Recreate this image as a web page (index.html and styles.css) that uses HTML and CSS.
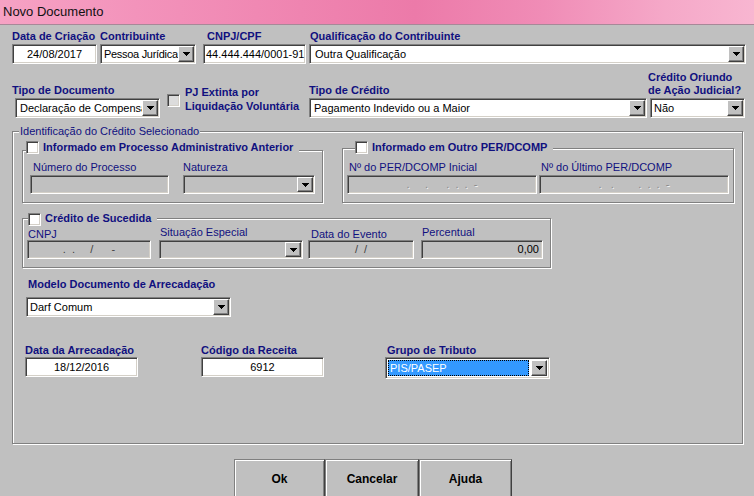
FILE: index.html
```html
<!DOCTYPE html>
<html lang="pt-BR">
<head>
<meta charset="utf-8">
<title>Novo Documento</title>
<link rel="stylesheet" href="styles.css">
</head>
<body>
<div class="titlebar">Novo Documento</div>
<main class="dialog">
  <div class="row row-top">
    <div class="field w-data">
      <span class="lbl">Data de Criação</span>
      <div class="input center">24/08/2017</div>
    </div>
    <div class="field w-contrib">
      <span class="lbl">Contribuinte</span>
      <div class="select"><span class="val tight">Pessoa Jurídica</span><span class="dd"><svg width="7" height="4" viewBox="0 0 7 4"><path d="M0 0H7V1H6V2H5V3H4V4H3V3H2V2H1V1H0Z"/></svg></span></div>
    </div>
    <div class="field w-cnpj">
      <span class="lbl">CNPJ/CPF</span>
      <div class="input">44.444.444/0001-91</div>
    </div>
    <div class="field w-qual">
      <span class="lbl">Qualificação do Contribuinte</span>
      <div class="select"><span class="val">Outra Qualificação</span><span class="dd"><svg width="7" height="4" viewBox="0 0 7 4"><path d="M0 0H7V1H6V2H5V3H4V4H3V3H2V2H1V1H0Z"/></svg></span></div>
    </div>
  </div>

  <div class="row row-second">
    <div class="field w-tipodoc">
      <span class="lbl">Tipo de Documento</span>
      <div class="select"><span class="val">Declaração de Compensação</span><span class="dd"><svg width="7" height="4" viewBox="0 0 7 4"><path d="M0 0H7V1H6V2H5V3H4V4H3V3H2V2H1V1H0Z"/></svg></span></div>
    </div>
    <div class="pj">
      <span class="check gray"></span>
      <span class="pj-text">PJ Extinta por<br>Liquidação Voluntária</span>
    </div>
    <div class="field w-tipocred">
      <span class="lbl">Tipo de Crédito</span>
      <div class="select"><span class="val">Pagamento Indevido ou a Maior</span><span class="dd"><svg width="7" height="4" viewBox="0 0 7 4"><path d="M0 0H7V1H6V2H5V3H4V4H3V3H2V2H1V1H0Z"/></svg></span></div>
    </div>
    <div class="field w-oriundo">
      <span class="lbl">Crédito Oriundo<br>de Ação Judicial?</span>
      <div class="select"><span class="val">Não</span><span class="dd"><svg width="7" height="4" viewBox="0 0 7 4"><path d="M0 0H7V1H6V2H5V3H4V4H3V3H2V2H1V1H0Z"/></svg></span></div>
    </div>
  </div>

  <section class="group outer">
    <div class="gtitle outer-title">Identificação do Crédito Selecionado</div>

    <div class="subgroups">
      <div class="group g-proc">
        <div class="gtitle chk-title"><span class="check"></span><b>Informado em Processo Administrativo Anterior</b></div>
        <div class="fields">
          <div class="field w-nproc">
            <span class="sl">Número do Processo</span>
            <div class="input sm disabled"></div>
          </div>
          <div class="field w-natur">
            <span class="sl">Natureza</span>
            <div class="select sm disabled"><span class="val"></span><span class="dd"><svg width="7" height="4" viewBox="0 0 7 4"><path d="M0 0H7V1H6V2H5V3H4V4H3V3H2V2H1V1H0Z"/></svg></span></div>
          </div>
        </div>
      </div>

      <div class="group g-per">
        <div class="gtitle chk-title"><span class="check"></span><b>Informado em Outro PER/DCOMP</b></div>
        <div class="fields">
          <div class="field w-per">
            <span class="sl">Nº do PER/DCOMP Inicial</span>
            <div class="input sm disabled center mask light">.     .      .  .  .  -</div>
          </div>
          <div class="field w-per2">
            <span class="sl">Nº do Último PER/DCOMP</span>
            <div class="input sm disabled center mask light">.   .        .  .  .  -</div>
          </div>
        </div>
      </div>
    </div>

    <div class="group g-suc">
      <div class="gtitle chk-title"><span class="check"></span><b>Crédito de Sucedida</b></div>
      <div class="fields">
        <div class="field w-scnpj">
          <span class="sl low">CNPJ</span>
          <div class="input sm disabled center mask">.  .     /      -</div>
        </div>
        <div class="field w-sit">
          <span class="sl">Situação Especial</span>
          <div class="select sm disabled"><span class="val"></span><span class="dd"><svg width="7" height="4" viewBox="0 0 7 4"><path d="M0 0H7V1H6V2H5V3H4V4H3V3H2V2H1V1H0Z"/></svg></span></div>
        </div>
        <div class="field w-evento">
          <span class="sl low">Data do Evento</span>
          <div class="input sm disabled center mask">/  /</div>
        </div>
        <div class="field w-perc">
          <span class="sl">Percentual</span>
          <div class="input sm disabled right">0,00</div>
        </div>
      </div>
    </div>

    <div class="field modelo">
      <span class="lbl">Modelo Documento de Arrecadação</span>
      <div class="select"><span class="val">Darf Comum</span><span class="dd"><svg width="7" height="4" viewBox="0 0 7 4"><path d="M0 0H7V1H6V2H5V3H4V4H3V3H2V2H1V1H0Z"/></svg></span></div>
    </div>

    <div class="row row-arrec">
      <div class="field w-darr">
        <span class="lbl">Data da Arrecadação</span>
        <div class="input center">18/12/2016</div>
      </div>
      <div class="field w-cod">
        <span class="lbl">Código da Receita</span>
        <div class="input center">6912</div>
      </div>
      <div class="field w-grupo">
        <span class="lbl">Grupo de Tributo</span>
        <div class="select tall focused"><span class="val">PIS/PASEP</span><span class="dd"><svg width="7" height="4" viewBox="0 0 7 4"><path d="M0 0H7V1H6V2H5V3H4V4H3V3H2V2H1V1H0Z"/></svg></span></div>
      </div>
    </div>
  </section>

  <div class="buttons">
    <button class="btn b-ok" type="button">Ok</button>
    <button class="btn b-cancel" type="button">Cancelar</button>
    <button class="btn b-help" type="button">Ajuda</button>
  </div>
</main>
</body>
</html>
```

FILE: styles.css
```css
* { box-sizing: border-box; }
html, body { margin: 0; padding: 0; }
body {
  width: 754px;
  height: 496px;
  overflow: hidden;
  background: #c0c0c0;
  font-family: "Liberation Sans", Arial, sans-serif;
  font-size: 11px;
  color: #000;
}

.titlebar {
  height: 25px;
  padding-left: 3px;
  line-height: 23px;
  font-size: 13px;
  color: #111;
  background: linear-gradient(90deg, #f6a2c4 0%, #f393bb 18%, #ef84b0 40%, #ec7aa9 55%, #f08cb6 72%, #f5a8c8 88%, #f8b6d1 100%);
  border-bottom: 1px solid #a88898;
}

.dialog { display: flex; flex-direction: column; }

.row { display: flex; }
.field { display: flex; flex-direction: column; flex: none; }

.lbl {
  font-weight: bold;
  color: #10107f;
  line-height: 13px;
  white-space: nowrap;
  margin-bottom: 1px;
}
.sl {
  color: #10107f;
  line-height: 13px;
  white-space: nowrap;
  margin-bottom: 1px;
}

/* sunken controls */
.input, .select {
  height: 20px;
  background: #fff;
  border: 1px solid;
  border-color: #808080 #fff #fff #808080;
  box-shadow: inset 1px 1px 0 #404040, inset -1px -1px 0 #d4d0c8;
  white-space: pre;
  overflow: hidden;
}
.input { padding: 0 2px; line-height: 18px; }
.input.sm, .select.sm { height: 19px; line-height: 17px; }
.input.center { text-align: center; }
.input.right { text-align: right; padding-right: 3px; }
.input.disabled, .select.disabled { background: #c0c0c0; }
.mask { color: #404040; }
.mask.light { color: #8a8a8a; text-shadow: 1px 1px 0 #f4f4f4; }

.select { display: flex; }
.select .val {
  flex: 1;
  min-width: 0;
  padding-left: 3px;
  line-height: 18px;
  overflow: hidden;
  white-space: nowrap;
}
.select .val.tight { letter-spacing: -0.3px; }
.select.sm .val { line-height: 17px; }
.dd {
  flex: none;
  width: 16px;
  margin: 1px 1px 1px 0;
  display: flex;
  align-items: center;
  justify-content: center;
  background: #c0c0c0;
  border: 1px solid;
  border-color: #fff #404040 #404040 #fff;
  box-shadow: inset -1px -1px 0 #808080;
}
.dd svg { display: block; fill: #000; shape-rendering: crispEdges; }

.select.tall { height: 22px; padding: 1px; }
.select.focused .val {
  background: #3399ff;
  color: #fff;
  outline: 1px dotted #000;
  outline-offset: -1px;
  margin: 1px 2px 1px 1px;
  line-height: 16px;
  padding-left: 2px;
}

/* row 1 */
.row-top { margin-top: 5px; padding-left: 12px; }
.w-data { width: 85px; }
.w-contrib { width: 96px; margin-left: 3px; }
.w-cnpj { width: 103px; margin-left: 7px; }
.w-cnpj .lbl { padding-left: 4px; }
.w-qual { width: 437px; margin-left: 3px; }
.w-qual .lbl { padding-left: 1px; }
.w-qual .select .val { padding-left: 5px; }

/* row 2 */
.row-second { margin-top: 7px; padding-left: 12px; align-items: flex-end; }
.w-tipodoc { width: 148px; }
.w-tipodoc .select { margin-left: 3px; }
.w-tipodoc .select .val { padding-left: 4px; }
.pj {
  flex: none;
  width: 142px;
  margin-left: 7px;
  margin-bottom: 5px;
  display: flex;
  align-items: flex-end;
}
.pj .check { margin-bottom: 6px; }
.pj-text {
  margin-left: 5px;
  font-weight: bold;
  color: #10107f;
  line-height: 14px;
  white-space: nowrap;
}
.w-tipocred { width: 338px; }
.w-tipocred .select .val { padding-left: 4px; }
.w-oriundo { width: 97px; margin-left: 1px; }
.w-oriundo .select { margin-left: 2px; }

.check {
  flex: none;
  display: block;
  width: 13px;
  height: 13px;
  background: #fff;
  border: 1px solid;
  border-color: #808080 #fff #fff #808080;
  box-shadow: inset 1px 1px 0 #404040, inset -1px -1px 0 #d4d0c8;
}
.check.gray { background: #dcdcdc; }

/* groups */
.group {
  flex: none;
  border: 1px solid #808080;
  box-shadow: inset 1px 1px 0 #fff, 1px 1px 0 #fff;
}
.gtitle {
  width: max-content;
  background: #c0c0c0;
  color: #10107f;
}
.outer {
  margin: 13px 0 0 12px;
  width: 731px;
  height: 313px;
  padding-left: 9px;
  display: flex;
  flex-direction: column;
  align-items: flex-start;
}
.outer-title {
  margin: -7px 0 0 -3px;
  padding: 0 1px;
  line-height: 13px;
}
.chk-title {
  display: flex;
  align-items: flex-start;
  height: 15px;
  line-height: 15px;
  padding-right: 6px;
}
.chk-title .check { margin-top: 1px; margin-right: 4px; }
.chk-title b { font-weight: bold; white-space: nowrap; }

.fields { display: flex; }

.subgroups { display: flex; align-items: flex-start; margin-top: 12px; }

.g-proc { width: 301px; padding: 0 7px 8px 7px; }
.g-proc .chk-title { margin: -11px 0 0 -4px; }
.g-proc .fields { margin-top: 6px; }
.w-nproc { width: 139px; }
.w-nproc .sl { padding-left: 3px; }
.w-natur { width: 132px; margin-left: 14px; }

.g-per { width: 392px; margin-left: 19px; margin-top: -2px; padding: 0 4px 8px 4px; }
.g-per .chk-title { margin: -9px 0 0 8px; }
.g-per .fields { margin-top: 6px; }
.w-per, .w-per2 { width: 190px; }
.w-per2 { margin-left: 2px; }
.w-per .sl, .w-per2 .sl { padding-left: 2px; }

.g-suc { width: 529px; margin-top: 15px; padding: 0 7px 8px 4px; }
.g-suc .chk-title { margin: -8px 0 0 1px; }
.g-suc .chk-title .check { margin-top: 2px; }
.w-scnpj { width: 124px; }
.w-scnpj .sl { padding-left: 1px; }
.w-sit { width: 144px; margin-left: 8px; }
.w-sit .sl { padding-left: 1px; }
.w-evento { width: 106px; margin-left: 5px; }
.w-evento .sl { padding-left: 3px; }
.w-perc { width: 122px; margin-left: 7px; }
.w-perc .sl { padding-left: 1px; }
.sl.low { padding-top: 3px; line-height: 10px; }

.modelo { margin-top: 10px; }
.modelo .lbl { margin-left: 6px; margin-bottom: 6px; }
.modelo .select { margin-left: 4px; width: 205px; }

.row-arrec { margin-top: 27px; }
.row-arrec .lbl { margin-bottom: 0; }
.w-darr { width: 113px; margin-left: 3px; }
.w-cod { width: 123px; margin-left: 63px; }
.w-grupo { width: 165px; margin-left: 61px; }
.w-grupo .lbl { padding-left: 2px; }

/* buttons */
.buttons { display: flex; margin-top: 15px; padding-left: 234px; }
.btn {
  flex: none;
  height: 40px;
  margin: 0;
  padding: 0;
  font-family: "Liberation Sans", Arial, sans-serif;
  font-size: 12px;
  font-weight: bold;
  color: #000;
  background: #c0c0c0;
  border: 1px solid;
  border-color: #808080 #404040 #404040 #808080;
  box-shadow: inset 1px 1px 0 #fff, inset -1px -1px 0 #808080;
}
.b-ok { width: 91px; }
.b-cancel { width: 94px; }
.b-help { width: 93px; }
```
